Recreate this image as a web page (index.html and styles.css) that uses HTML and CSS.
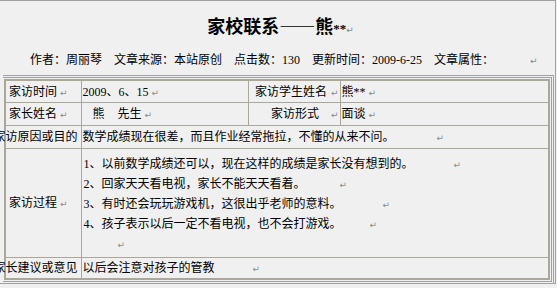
FILE: index.html
```html
<!DOCTYPE html>
<html lang="zh-CN">
<head>
<meta charset="utf-8">
<title>家校联系——熊**</title>
<link rel="stylesheet" href="styles.css">
</head>
<body>
<div class="page">
  <div class="head">
    <h1 class="title">家校联系——熊<span class="stars">**</span><span class="ret">↵</span></h1>
    <p class="byline"><span class="item">作者：周丽琴</span><span class="item">文章来源：本站原创</span><span class="item">点击数：130</span><span class="item">更新时间：2009-6-25</span><span class="item">文章属性：</span><span class="ret far">↵</span></p>
  </div>
  <div class="frame">
    <div class="frame-in">
      <table class="info">
        <colgroup><col class="c1"><col class="c2"><col class="c3"><col class="c4"></colgroup>
        <tr class="r1">
          <td>家访时间 <span class="ret">↵</span></td>
          <td>2009、6、15 <span class="ret">↵</span></td>
          <td class="right">家访学生姓名<span class="ret gap4">↵</span></td>
          <td>熊** <span class="ret">↵</span></td>
        </tr>
        <tr class="r2">
          <td>家长姓名 <span class="ret">↵</span></td>
          <td><span class="name">熊</span><span class="name2">先生</span> <span class="ret">↵</span></td>
          <td class="right">家访形式<span class="ret gap12">↵</span></td>
          <td>面谈 <span class="ret">↵</span></td>
        </tr>
        <tr class="r3">
          <td><div class="over">家访原因或目的</div></td>
          <td colspan="3">数学成绩现在很差，而且作业经常拖拉，不懂的从来不问。<span class="ret gap42">↵</span></td>
        </tr>
        <tr class="r4">
          <td>家访过程 <span class="ret">↵</span></td>
          <td colspan="3" class="steps">
            <div>1、以前数学成绩还可以，现在这样的成绩是家长没有想到的。<span class="ret gap40">↵</span></div>
            <div>2、回家天天看电视，家长不能天天看着。<span class="ret gap34">↵</span></div>
            <div>3、有时还会玩玩游戏机，这很出乎老师的意料。<span class="ret gap41">↵</span></div>
            <div>4、孩子表示以后一定不看电视，也不会打游戏。<span class="ret gap28">↵</span></div>
            <div><span class="ret gap34">↵</span></div>
          </td>
        </tr>
        <tr class="r5">
          <td><div class="over">家长建议或意见</div></td>
          <td colspan="3">以后会注意对孩子的管教<span class="ret gap38">↵</span></td>
        </tr>
      </table>
    </div>
  </div>
</div>
</body>
</html>
```
FILE: styles.css
```css
html, body {
  margin: 0;
  padding: 0;
}
body {
  background: #f0f0f0;
  color: #000;
  font-family: "Liberation Serif", "Noto Sans CJK SC", serif;
  font-size: 12px;
  line-height: 1;
}
.page {
  box-sizing: border-box;
  width: 556px;
  height: 284px;
  border-top: 1px solid #a0a0a0;
  border-right: 1px solid #a0a0a0;
  border-bottom: 1px solid #a0a0a0;
}
.head {
  height: 74px;
  display: flex;
  flex-direction: column;
}
.title {
  margin: 14px 0 0;
  height: 20px;
  font-family: "Noto Sans CJK SC", sans-serif;
  font-size: 18px;
  font-weight: bold;
  line-height: 20px;
  text-align: center;
  padding-left: 6px;
  white-space: nowrap;
}
.stars {
  font-family: "Liberation Serif", serif;
  font-size: 13px;
  font-weight: bold;
  line-height: 1;
}
.byline {
  margin: 18px 0 0 30px;
  height: 14px;
  line-height: 14px;
  white-space: nowrap;
}
.item {
  margin-right: 12px;
}
.ret {
  font-family: "DejaVu Sans", sans-serif;
  font-size: 9px;
  line-height: 1;
  color: #8a8a8a;
  font-weight: normal;
}
.far { margin-left: 24px; }
.frame {
  margin: 0 1px 0 3px;
  border: 1px solid #a0a0a0;
  border-left: 0;
  padding: 1px 1px 1px 0;
}
.frame-in {
  border: 1px solid #a0a0a0;
  border-left: 0;
  padding: 1px 1px 1px 1px;
}
.info {
  width: 546px;
  table-layout: fixed;
  border-collapse: collapse;
  border: 2px solid #aca899;
}
.info td {
  border: 1px solid #aca899;
  padding: 0 0 0 3px;
  white-space: nowrap;
  overflow: visible;
  vertical-align: middle;
}
.info td + td { padding-left: 1px; }
.c1 { width: 76px; }
.c2 { width: 167px; }
.c3 { width: 92px; }
.r1 td { height: 21px; }
.r2 td { height: 22px; }
.r3 td { height: 22px; }
.r4 td { height: 106px; }
.r5 td { height: 20px; }
.info td.right {
  text-align: right;
  padding-right: 1px;
}
.over {
  display: flex;
  justify-content: flex-end;
  white-space: nowrap;
  margin-right: 3px;
}
.name { margin-left: 10px; }
.name2 { margin-left: 13px; }
.steps {
  line-height: 20px;
  padding-top: 2px !important;
  padding-left: 2px !important;
}
.steps div { height: 20px; }
.gap4 { margin-left: 4px; }
.gap12 { margin-left: 12px; }
.gap42 { margin-left: 42px; }
.gap40 { margin-left: 40px; }
.gap41 { margin-left: 41px; }
.gap34 { margin-left: 34px; }
.gap28 { margin-left: 28px; }
.gap38 { margin-left: 38px; }
```
